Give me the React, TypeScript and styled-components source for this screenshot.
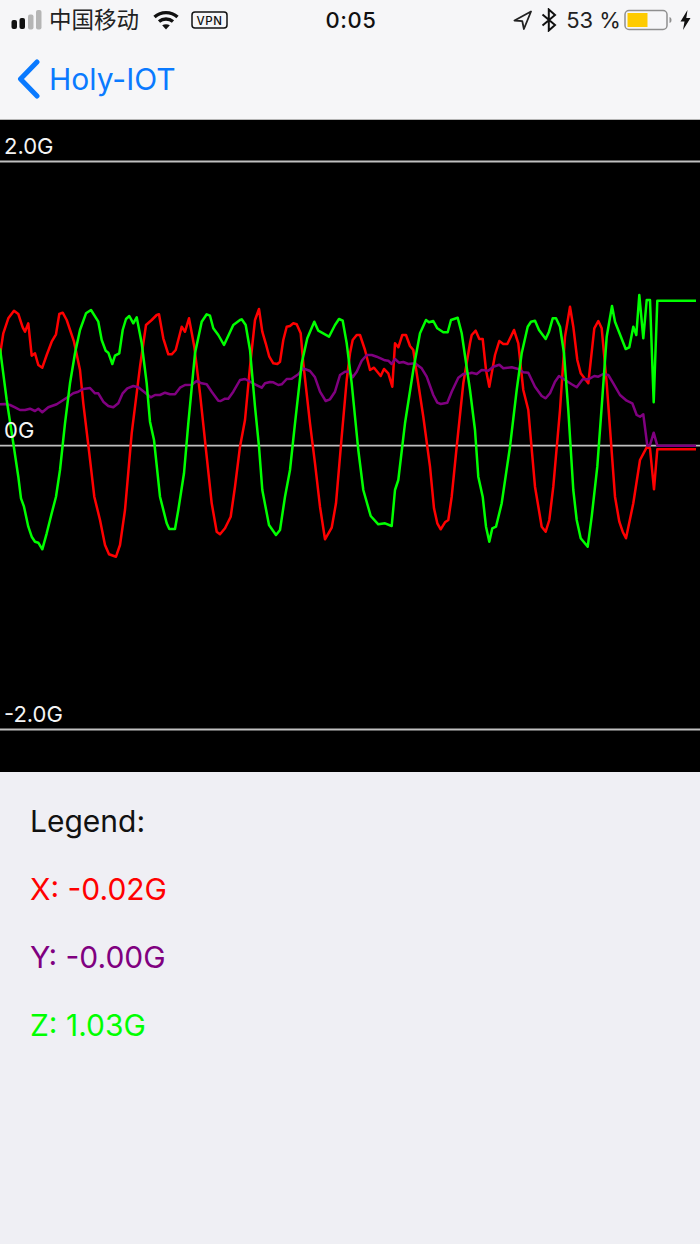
import React from "react";
import styled, { createGlobalStyle } from "styled-components";

const GlobalStyle = createGlobalStyle`
  html, body { margin: 0; padding: 0; background: #efeff4; }
  body { font-family: Inter, "Noto Sans CJK SC", sans-serif; }
`;

const Page = styled.div`
  width: 700px;
  height: 1244px;
  display: flex;
  flex-direction: column;
  overflow: hidden;
  background: #efeff4;
`;

const Header = styled.header`
  height: 119px;
  flex: none;
  background: #f6f6f8;
  border-bottom: 1px solid #b5b5b5;
  display: flex;
  flex-direction: column;
`;

const StatusBar = styled.div`
  height: 40px;
  display: flex;
  align-items: center;
  justify-content: space-between;
  padding: 0 9px 2px 11px;
  color: #111;
`;

const StatusGroup = styled.div`
  display: flex;
  align-items: center;
  width: 264px;
`;

const RightGroup = styled(StatusGroup)`
  justify-content: flex-end;
`;

const Gap = styled.span<{ $w: number }>`
  flex: none;
  width: ${(p) => p.$w}px;
`;

const Carrier = styled.span`
  font-size: 22.5px;
  line-height: 30px;
  margin: 0 14px 4px 6px;
  color: #222;
  font-family: "Noto Sans CJK SC", sans-serif;
`;

const Clock = styled.span`
  font-size: 22px;
  font-weight: 500;
  letter-spacing: 0.6px;
`;

const Percent = styled.span`
  font-size: 22px;
  margin: 0 3px 0 9px;
  color: #222;
`;

const NavBar = styled.nav`
  flex: 1;
  display: flex;
  align-items: center;
  padding: 0 0 4px 17px;
  color: #0a7aff;
`;

const BackLabel = styled.span`
  font-size: 30px;
  margin-left: 8px;
`;

const ChartFrame = styled.div`
  position: relative;
  flex: none;
  height: 652px;
  background: #000;
`;

const ChartSvg = styled.svg`
  display: block;
`;

const AxisLabel = styled.span<{ $top: number }>`
  position: absolute;
  left: 4px;
  top: ${(p) => p.$top}px;
  color: #f4f4f4;
  font-size: 22px;
  line-height: 24px;
`;

const Legend = styled.section`
  flex: 1;
  padding: 29px 30px;
  display: flex;
  flex-direction: column;
  gap: 28px;
`;

const LegendRow = styled.div<{ $color: string }>`
  font-size: 30px;
  line-height: 40px;
  color: ${(p) => p.$color};
`;

type Pt = [number, number];

// Each series is sampled in three overlapping windows, in 1/3 px units.
const stitch = (windows: [number, Pt[]][]): string => {
  const out: string[] = [];
  let lastX = -1;
  for (const [offset, pts] of windows) {
    for (const [x, y] of pts) {
      const px = offset + x / 3;
      if (px <= lastX) continue;
      lastX = px;
      out.push(`${px.toFixed(1)},${(170 + y / 3).toFixed(1)}`);
    }
  }
  return out.join(" ");
};

const red = stitch([
  [0, [[0,200],[3,175],[10,130],[25,85],[42,62],[55,72],[68,112],[75,125],[85,100],[95,197],[105,190],[115,225],[127,233],[140,195],[155,155],[168,133],[178,72],[188,68],[200,90],[222,155],[240,240],[250,340],[268,490],[283,620],[300,690],[315,765],[327,793],[348,800],[360,765],[375,660],[395,430],[420,230],[438,105],[455,90],[470,75],[477,73],[490,145],[505,193],[515,193],[527,180],[545,110],[555,125],[567,85],[583,170],[600,310],[620,500],[635,640],[650,725],[660,733],[675,715],[692,680],[705,590],[720,470]]],
  [230, [[45,390],[60,230],[75,90],[87,57],[97,125],[107,160],[118,200],[130,220],[142,222],[150,215],[160,150],[170,110],[180,108],[190,100],[200,103],[212,130],[220,220],[240,400],[255,520],[270,650],[285,748],[305,713],[318,640],[335,440],[350,270],[360,190],[368,150],[380,135],[390,135],[405,180],[420,240],[432,233],[452,258],[462,237],[475,250],[487,290],[495,160],[505,172],[517,135],[528,135],[540,168],[550,180],[560,250],[580,380],[600,530],[612,655],[622,700],[632,718],[645,697],[655,690],[665,620],[680,470],[700,280],[720,160]]],
  [460, [[15,250],[35,135],[47,122],[58,147],[68,147],[78,240],[88,290],[105,195],[118,153],[130,162],[142,162],[162,120],[175,160],[190,300],[205,360],[225,590],[245,710],[257,725],[268,690],[280,590],[300,360],[315,140],[330,50],[340,110],[352,210],[362,250],[385,280],[403,115],[415,93],[425,115],[440,280],[465,620],[478,695],[488,725],[498,745],[520,640],[540,510],[560,472],[570,475],[582,598],[592,478],[708,478]]],
]);

const green = stitch([
  [0, [[0,175],[20,330],[40,460],[55,560],[63,625],[72,650],[85,710],[95,740],[105,755],[115,758],[127,778],[140,730],[155,670],[168,620],[180,540],[195,400],[210,280],[225,190],[240,120],[258,70],[273,60],[295,95],[305,150],[317,182],[325,188],[337,222],[345,197],[358,190],[368,120],[378,87],[388,78],[400,100],[410,82],[425,160],[440,280],[450,395],[462,450],[480,620],[500,700],[508,717],[525,717],[535,660],[552,550],[565,400],[585,190],[605,95],[620,73],[630,77],[640,115],[655,135],[672,165],[700,105],[720,90]]],
  [230, [[35,88],[47,105],[60,180],[75,350],[87,470],[97,600],[117,705],[138,735],[150,720],[165,620],[180,540],[195,400],[215,220],[232,145],[253,95],[265,122],[297,140],[315,105],[327,87],[338,92],[350,160],[365,280],[385,480],[400,600],[422,678],[445,703],[465,700],[485,708],[495,600],[505,570],[525,400],[550,240],[570,130],[588,90],[597,97],[610,93],[622,115],[640,127],[653,127],[663,90],[683,83],[695,130],[720,300]]],
  [460, [[30,280],[45,420],[55,560],[68,620],[78,710],[88,755],[97,715],[108,710],[125,640],[150,470],[170,300],[185,190],[203,110],[213,95],[225,92],[237,120],[257,147],[267,125],[278,85],[288,85],[300,110],[312,190],[325,360],[340,600],[350,690],[362,745],[383,770],[395,680],[412,530],[425,350],[440,140],[456,48],[465,95],[497,177],[508,172],[520,110],[529,135],[538,15],[550,145],[560,30],[570,30],[581,337],[592,32],[708,32]]],
]);

const purple = stitch([
  [0, [[0,343],[15,342],[30,345],[45,352],[60,360],[75,360],[90,356],[105,363],[115,356],[127,367],[145,352],[170,343],[190,330],[205,320],[220,310],[235,305],[250,297],[270,294],[285,310],[295,310],[310,335],[325,348],[340,352],[355,340],[368,310],[382,295],[400,288],[415,292],[440,312],[452,322],[465,315],[480,315],[495,308],[510,313],[525,313],[540,293],[555,285],[575,284],[590,273],[605,280],[620,283],[635,305],[655,332],[662,333],[675,326],[685,326],[700,305],[720,270]]],
  [230, [[45,267],[60,275],[75,283],[95,293],[105,280],[120,276],[130,277],[145,285],[155,283],[170,267],[185,266],[205,253],[220,235],[240,243],[255,262],[270,305],[287,333],[300,328],[315,305],[330,255],[345,245],[358,245],[368,262],[380,245],[395,212],[410,195],[425,195],[440,200],[465,211],[475,212],[485,222],[495,207],[507,218],[520,216],[535,222],[555,220],[575,235],[590,260],[610,315],[622,338],[632,342],[652,338],[665,305],[685,263],[700,252],[720,250]]],
  [460, [[15,250],[35,248],[50,252],[65,240],[85,242],[100,230],[118,224],[130,235],[155,232],[175,237],[190,247],[205,248],[225,290],[245,318],[257,325],[270,310],[285,275],[297,258],[315,270],[335,283],[350,292],[368,268],[385,268],[403,258],[415,260],[430,252],[445,255],[460,280],[480,315],[500,332],[517,340],[530,375],[540,380],[550,373],[562,467],[570,465],[581,428],[592,467],[708,467]]],
]);

const SignalIcon = () => (
  <svg width="32" height="22" viewBox="0 0 32 22">
    <rect x="0.5" y="11" width="5.5" height="9" rx="2" fill="#111" />
    <rect x="8.5" y="9" width="5.5" height="11" rx="2" fill="#111" />
    <rect x="17" y="5.5" width="5.5" height="15" rx="2" fill="#b5b5b5" />
    <rect x="25" y="1" width="5.5" height="19.5" rx="2" fill="#b5b5b5" />
  </svg>
);

const WifiIcon = () => (
  <svg width="26" height="20" viewBox="0 0 26 20" fill="none" stroke="#111" strokeWidth="3.4">
    <path d="M1.5 7c6.500-5.800 16.500-5.800 23 0" />
    <path d="M6 11.500c4-3.300 10-3.300 14 0" />
    <path d="M13 19.500l-3.800-4.200c2.200-1.500 5.400-1.500 7.600 0z" fill="#111" stroke="none" />
  </svg>
);

const VpnBadge = () => (
  <svg width="37" height="18" viewBox="0 0 37 18">
    <rect x="1" y="1" width="35" height="16" rx="3" fill="none" stroke="#111" strokeWidth="1.5" />
    <text x="18.5" y="13.5" textAnchor="middle" fontSize="11.5" fontFamily="Inter, sans-serif" fontWeight="500" letterSpacing="0.6" fill="#111">VPN</text>
  </svg>
);

const LocationIcon = () => (
  <svg width="20" height="20" viewBox="0 0 20 20" fill="none" stroke="#222" strokeWidth="1.8" strokeLinejoin="round">
    <path d="M18 1.500L1.500 10.500l7.800 0.700 1.600 7.800z" />
  </svg>
);

const BluetoothIcon = () => (
  <svg width="16" height="24" viewBox="0 0 16 24" fill="none" stroke="#111" strokeWidth="2">
    <path d="M1.500 6.500l12.500 10.500-6.200 5.500V1.500L14 7 1.500 17.500" />
  </svg>
);

const BatteryIcon = () => (
  <svg width="48" height="22" viewBox="0 0 48 22">
    <rect x="1" y="1.500" width="42" height="19" rx="4" fill="none" stroke="#8f8f8f" strokeWidth="1.5" />
    <rect x="3.500" y="4" width="20" height="14" fill="#fecb00" />
    <path d="M45.500 8c1.500 0.500 2 1.500 2 3s-0.500 2.500-2 3z" fill="#8f8f8f" />
  </svg>
);

const BoltIcon = () => (
  <svg width="11" height="20" viewBox="0 0 11 20">
    <path d="M7.500 0L0.500 11.500h4L3 20l7.500-12h-4.200z" fill="#111" />
  </svg>
);

const BackChevron = () => (
  <svg width="24" height="40" viewBox="0 0 24 40" fill="none" stroke="currentColor" strokeWidth="5" strokeLinecap="round" strokeLinejoin="round">
    <path d="M20 3L3.500 20 20 37" />
  </svg>
);

export default function App() {
  return (
    <Page>
      <GlobalStyle />
      <Header>
        <StatusBar>
          <StatusGroup>
            <SignalIcon />
            <Carrier>中国移动</Carrier>
            <WifiIcon />
            <Gap $w={12} />
            <VpnBadge />
          </StatusGroup>
          <Clock>0:05</Clock>
          <RightGroup>
            <LocationIcon />
            <Gap $w={8} />
            <BluetoothIcon />
            <Percent>53 %</Percent>
            <BatteryIcon />
            <Gap $w={8} />
            <BoltIcon />
          </RightGroup>
        </StatusBar>
        <NavBar>
          <BackChevron />
          <BackLabel>Holy-IOT</BackLabel>
        </NavBar>
      </Header>
      <ChartFrame>
        <AxisLabel $top={14}>2.0G</AxisLabel>
        <AxisLabel $top={298}>0G</AxisLabel>
        <AxisLabel $top={582}>-2.0G</AxisLabel>
        <ChartSvg width="700" height="652" viewBox="0 0 700 652">
          <g stroke="#c0c0c0" strokeWidth="1.8">
            <line x1="0" x2="700" y1="41.5" y2="41.5" />
            <line x1="0" x2="700" y1="325.7" y2="325.7" />
            <line x1="0" x2="700" y1="609.5" y2="609.5" />
          </g>
          <g fill="none" strokeWidth="2.5" strokeLinejoin="round">
            <polyline points={red} stroke="#ff0000" />
            <polyline points={purple} stroke="#800080" />
            <polyline points={green} stroke="#00ff00" />
          </g>
        </ChartSvg>
      </ChartFrame>
      <Legend>
        <LegendRow $color="#111">Legend:</LegendRow>
        <LegendRow $color="#ff0000">X: -0.02G</LegendRow>
        <LegendRow $color="#800080">Y: -0.00G</LegendRow>
        <LegendRow $color="#00ff00">Z: 1.03G</LegendRow>
      </Legend>
    </Page>
  );
}
